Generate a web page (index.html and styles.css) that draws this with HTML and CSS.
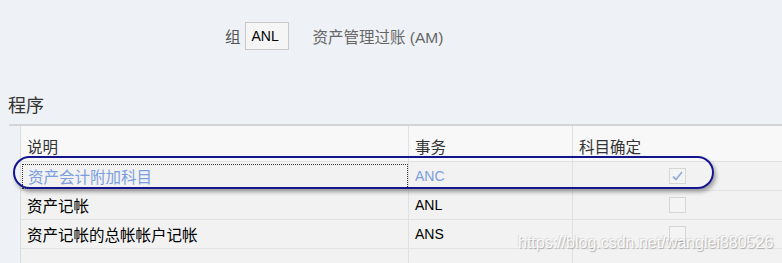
FILE: index.html
```html
<!DOCTYPE html>
<html lang="zh">
<head>
<meta charset="utf-8">
<link rel="stylesheet" href="styles.css">
</head>
<body>
<div class="page">
  <div class="top">
    <span class="lbl">组</span>
    <span class="field">ANL</span>
    <span class="desc">资产管理过账 (AM)</span>
  </div>
  <div class="section-title">程序</div>
  <div class="rule"></div>
  <div class="table">
    <div class="row head">
      <div class="c c1">说明</div>
      <div class="c c2">事务</div>
      <div class="c c3">科目确定</div>
    </div>
    <div class="row sel">
      <div class="c c1"><span class="focus">资产会计附加科目</span></div>
      <div class="c c2">ANC</div>
      <div class="c c3"><span class="cb checked"><svg class="tick" width="13" height="12" viewBox="0 0 13 12"><path d="M2 6.5 L5 9.5 L11 2" fill="none" stroke="#93b0d8" stroke-width="1.8"/></svg></span></div>
    </div>
    <div class="row">
      <div class="c c1">资产记帐</div>
      <div class="c c2">ANL</div>
      <div class="c c3"><span class="cb"></span></div>
    </div>
    <div class="row">
      <div class="c c1">资产记帐的总帐帐户记帐</div>
      <div class="c c2">ANS</div>
      <div class="c c3"><span class="cb"></span></div>
    </div>
    <div class="row empty">
      <div class="c c1"></div>
      <div class="c c2"></div>
      <div class="c c3"></div>
    </div>
  </div>
  <div class="annot"></div>
  <div class="watermark">https://blog.csdn.net/wanglei880526</div>
</div>
</body>
</html>
```
FILE: styles.css
```css
html, body {
  margin: 0;
  padding: 0;
  background: #eef2f6;
  overflow: hidden;
}
.page {
  position: relative;
  width: 782px;
  height: 263px;
  font-family: "Liberation Sans", "Noto Sans CJK SC", sans-serif;
  font-size: 14px;
  color: #000;
}
.top {
  display: flex;
  align-items: center;
  padding: 22px 0 0 225px;
  height: 28px;
}
.lbl {
  color: #555;
  font-size: 15.5px;
  margin-right: 4px;
}
.field {
  box-sizing: border-box;
  width: 44px;
  height: 28px;
  border: 1px solid #c9c9c9;
  background: #f5f5f5;
  display: flex;
  align-items: center;
  padding-left: 6px;
  color: #000;
}
.desc {
  margin-left: 24px;
  color: #666;
  font-size: 15.5px;
}
.section-title {
  margin: 45px 0 0 8px;
  font-size: 18px;
  line-height: 22px;
  color: #333;
  height: 22px;
}
.rule {
  margin: 7px 0 0 9px;
  height: 2px;
  background: #d2d4d6;
}
.table {
  margin-left: 20px;
  border-left: 1px solid #dcdcdc;
  background: #f2f2f2;
}
.row {
  display: grid;
  grid-template-columns: 388px 164px 1fr;
  height: 28px;
  border-bottom: 1px solid #e2e2e2;
}
.row.head {
  height: 35px;
  background: #f8f8f8;
  border-bottom: 1px solid #e0e0e0;
  color: #333;
}
.row.head .c {
  padding-top: 4px;
  padding-left: 6px;
}
.c1 {
  font-size: 15.5px;
}
.head .c {
  font-size: 15.5px;
}
.c {
  display: flex;
  align-items: center;
  padding-left: 6px;
  border-right: 1px solid #e0e0e0;
}
.c3 {
  border-right: none;
  padding-left: 96px;
}
.sel .c1 {
  padding-left: 1px;
}
.focus {
  box-sizing: border-box;
  width: 387px;
  height: 25px;
  border: 1px dotted #333;
  padding-left: 5px;
  display: flex;
  align-items: center;
  color: #7a9ee0;
}
.sel .c2 {
  color: #7a9ee0;
}
.cb {
  box-sizing: border-box;
  width: 17px;
  height: 16px;
  border: 1px solid #d6d6d6;
  background: #f4f4f4;
  display: flex;
  align-items: center;
  justify-content: center;
}
.tick {
  display: block;
}
.row.empty {
  height: 30px;
}
.annot {
  position: absolute;
  left: 13px;
  top: 156px;
  width: 697px;
  height: 29px;
  border: 2px solid #14148c;
  border-radius: 17px;
  box-shadow: 2px 3px 4px rgba(0,0,0,0.35);
}
.watermark {
  position: absolute;
  left: 518px;
  top: 234px;
  font-size: 16px;
  color: rgba(255,255,255,0.9);
  text-shadow: 1px 1px 1px rgba(0,0,0,0.25), -1px -1px 1px rgba(0,0,0,0.1);
}
```
